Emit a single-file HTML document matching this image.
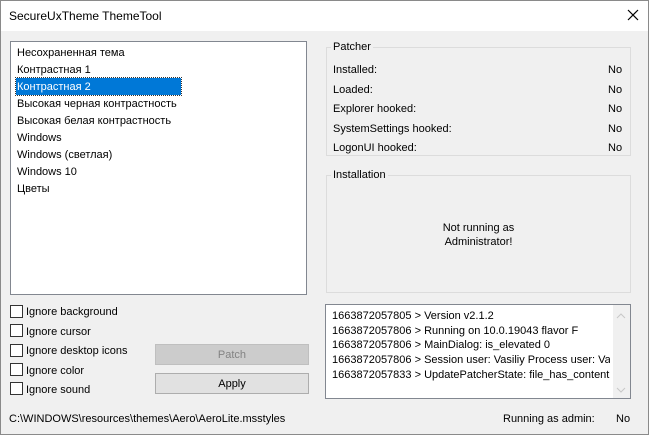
<!DOCTYPE html>
<html><head><style>
*{margin:0;padding:0;box-sizing:border-box}
body{width:649px;height:435px;background:#f0f0f0;font-family:"Liberation Sans",sans-serif;font-size:11px;color:#000;position:relative;overflow:hidden}
.a{position:absolute;white-space:nowrap}
.title{left:0;top:0;width:649px;height:31px;background:#fff}
.list{left:10px;top:41px;width:297px;height:254px;background:#fff;border:1px solid #828790}
.grp{border:1px solid #dcdcdc}
.cb{width:13px;height:13px;border:1px solid #333;background:#fff}
.btn{border:1px solid #adadad;background:#e1e1e1;text-align:center;line-height:20px}
</style></head><body>
<div class="a title"></div>
<div class="a" style="left:0;top:0;width:649px;height:435px;border:1px solid #8a8a8a;z-index:5"></div>
<div class="a" style="left:9px;top:9px;font-size:12px">SecureUxTheme ThemeTool</div>
<svg class="a" style="left:627px;top:9px" width="12" height="12"><path d="M1 1L11 11M11 1L1 11" stroke="#000" stroke-width="1.2"/></svg>
<div class="a list"></div>
<div class="a" style="left:16px;top:78px;width:165px;height:17px;background:#0078d7;outline:1px dotted #333"></div>
<div class="a" style="left:17px;top:45px;line-height:17px">Несохраненная тема<br>Контрастная 1<br><span style="color:#fff">Контрастная 2</span><br>Высокая черная контрастность<br>Высокая белая контрастность<br>Windows<br>Windows (светлая)<br>Windows 10<br>Цветы</div>
<div class="a grp" style="left:326px;top:47px;width:305px;height:109px"></div>
<div class="a" style="left:331px;top:41px;background:#f0f0f0;padding:0 2px">Patcher</div>
<div class="a" style="left:333px;top:61px;line-height:19.5px">Installed:<br>Loaded:<br>Explorer hooked:<br>SystemSettings hooked:<br>LogonUI hooked:</div>
<div class="a" style="left:608px;top:61px;line-height:19.5px">No<br>No<br>No<br>No<br>No</div>
<div class="a grp" style="left:326px;top:175px;width:305px;height:118px"></div>
<div class="a" style="left:331px;top:169px;background:#f0f0f0;padding:0 2px">Installation</div>
<div class="a" style="left:326px;top:221px;width:305px;text-align:center;line-height:14px;white-space:normal">Not running as<br>Administrator!</div>
<div class="a" style="left:325px;top:304px;width:306px;height:95px;background:#fff;border:1px solid #828790"></div>
<div class="a" style="left:332px;top:309px;line-height:14.7px;width:278px;overflow:hidden">1663872057805 &gt; Version v2.1.2<br>1663872057806 &gt; Running on 10.0.19043 flavor F<br>1663872057806 &gt; MainDialog: is_elevated 0<br>1663872057806 &gt; Session user: Vasiliy Process user: Vasiliy<br>1663872057833 &gt; UpdatePatcherState: file_has_content</div>
<div class="a" style="left:613px;top:305px;width:17px;height:93px;background:#f0f0f0"></div>
<svg class="a" style="left:616px;top:313px" width="10" height="80"><path d="M1 5L5 1L9 5M1 75L5 79L9 75" stroke="#c8c8c8" fill="none"/></svg>
<div class="a cb" style="left:10px;top:305px"></div><div class="a" style="left:26px;top:306px">Ignore background</div>
<div class="a cb" style="left:10px;top:324px"></div><div class="a" style="left:26px;top:326px">Ignore cursor</div>
<div class="a cb" style="left:10px;top:344px"></div><div class="a" style="left:26px;top:345px">Ignore desktop icons</div>
<div class="a cb" style="left:10px;top:363px"></div><div class="a" style="left:26px;top:365px">Ignore color</div>
<div class="a cb" style="left:10px;top:382px"></div><div class="a" style="left:26px;top:384px">Ignore sound</div>
<div class="a btn" style="left:155px;top:344px;width:154px;height:21px;color:#838383;border-color:#bfbfbf;background:#cccccc">Patch</div>
<div class="a btn" style="left:155px;top:373px;width:154px;height:21px">Apply</div>
<div class="a" style="left:9px;top:413px">C:\WINDOWS\resources\themes\Aero\AeroLite.msstyles</div>
<div class="a" style="left:503px;top:413px">Running as admin:</div>
<div class="a" style="left:616px;top:413px">No</div>
</body></html>
